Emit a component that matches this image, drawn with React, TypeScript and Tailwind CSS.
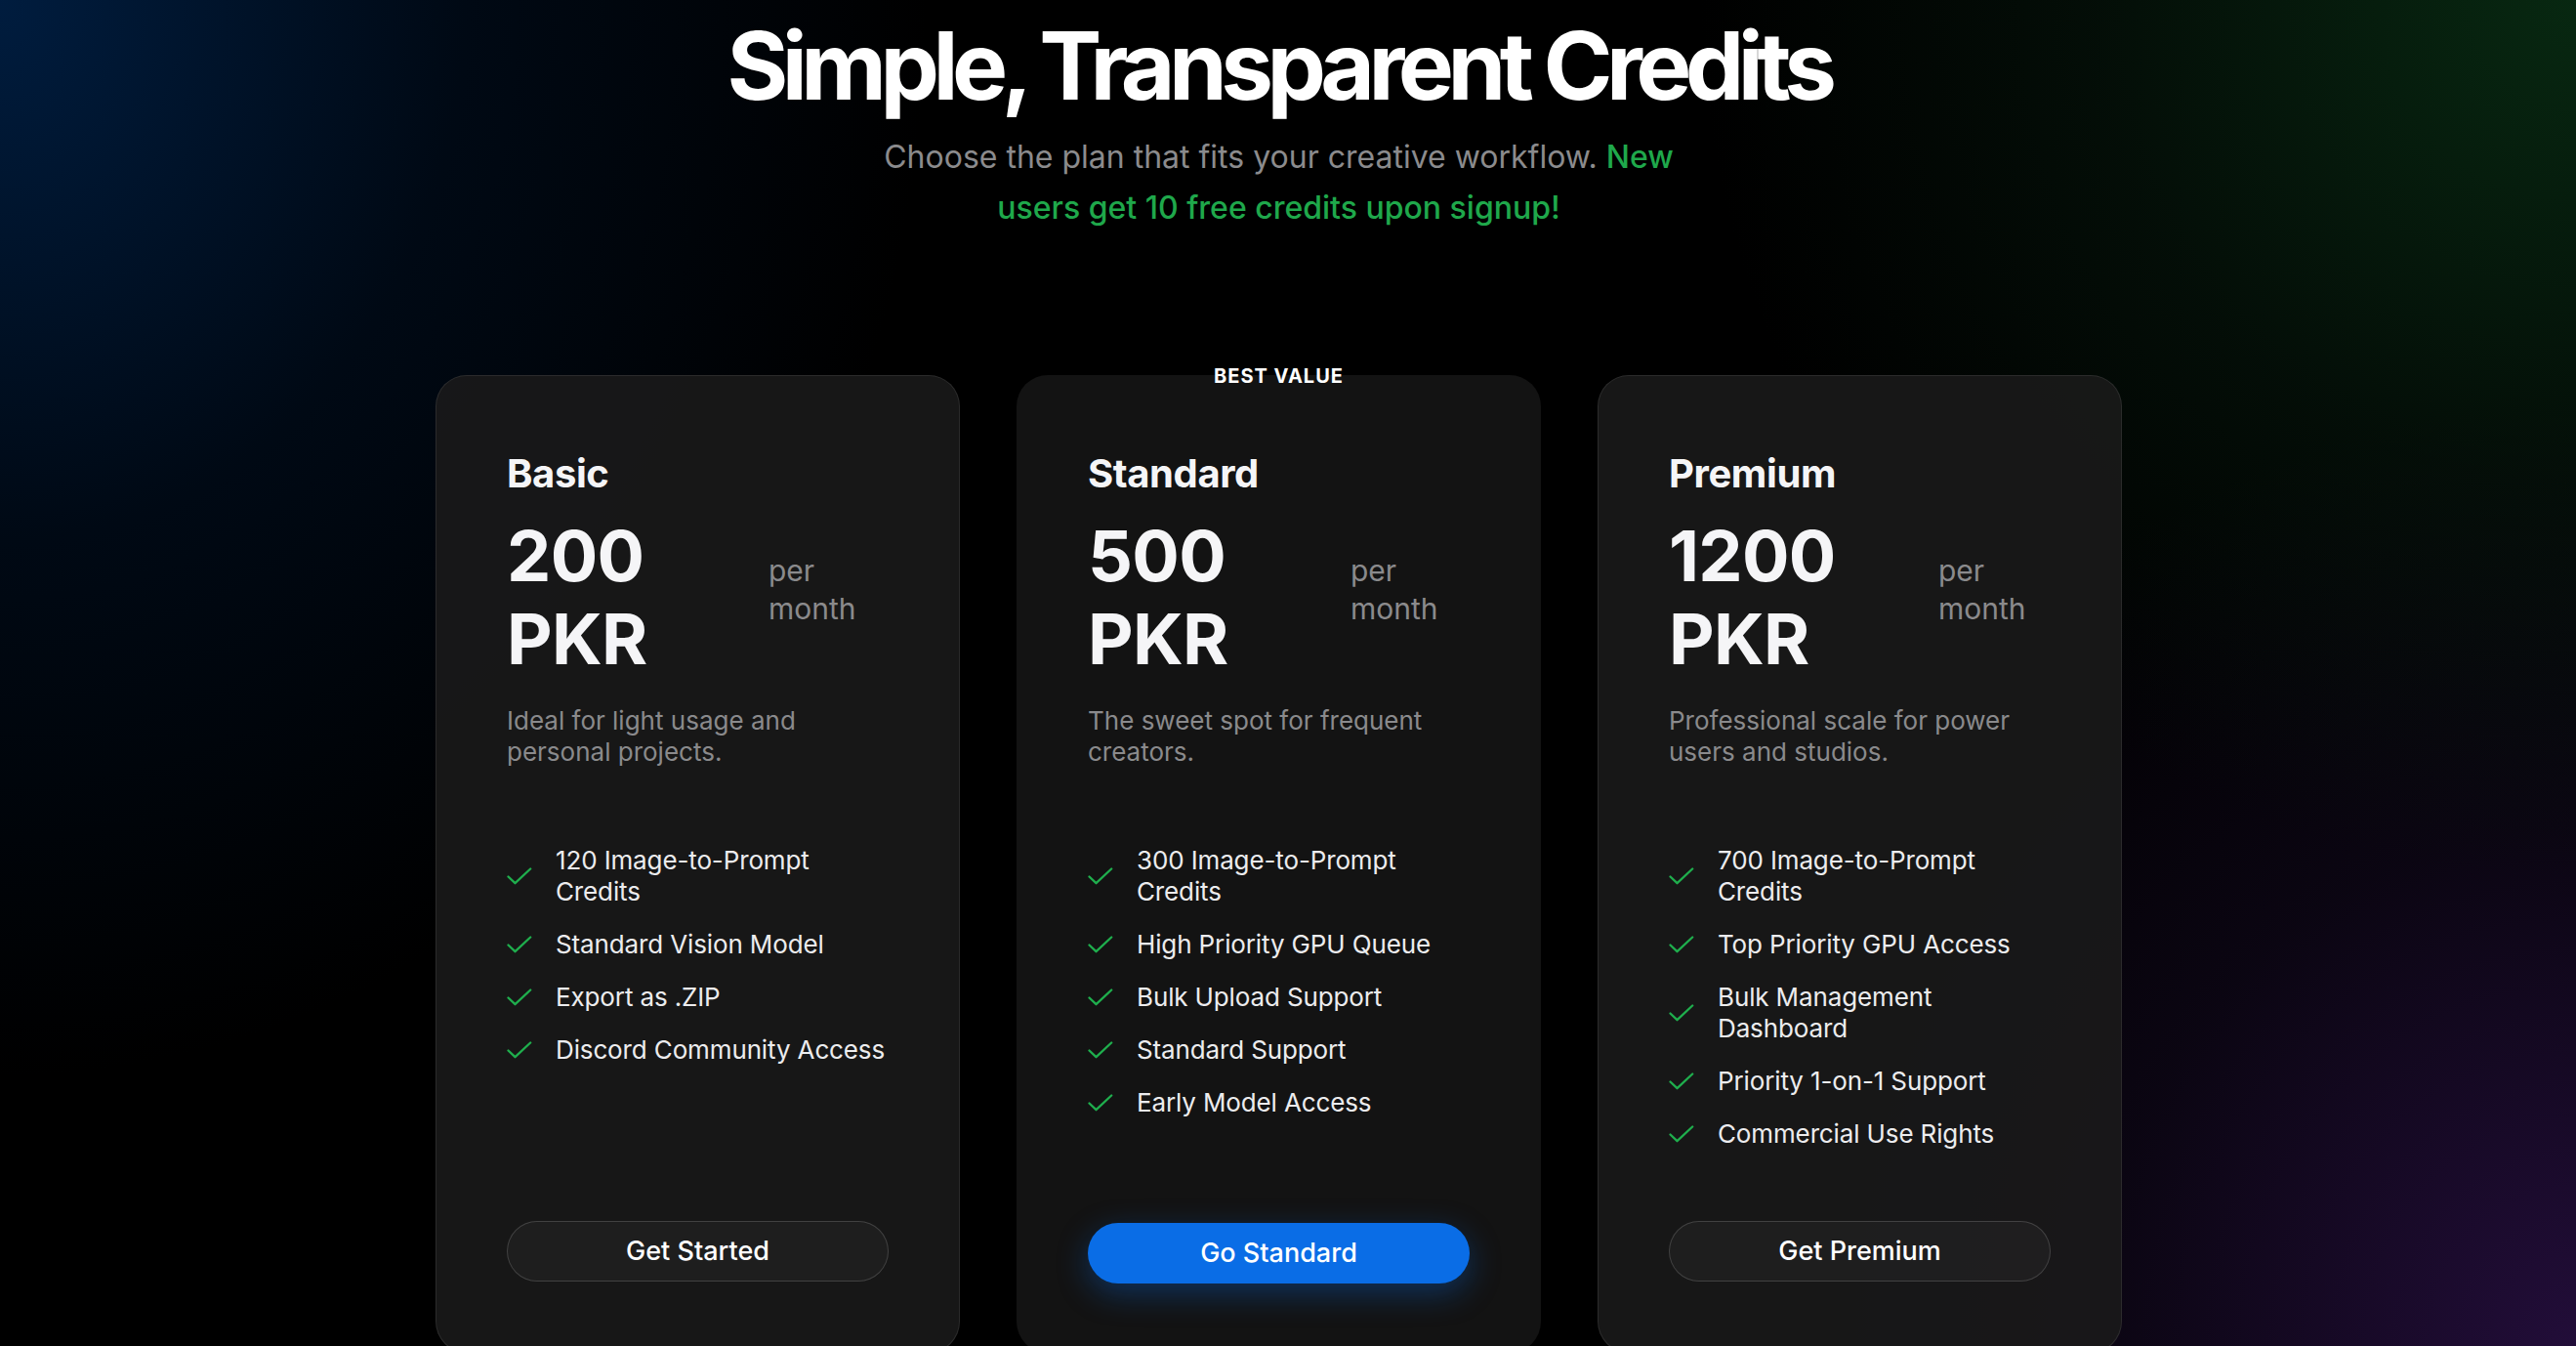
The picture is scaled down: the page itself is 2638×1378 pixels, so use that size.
import React from "react";

type Plan = {
  name: string;
  price: string;
  priceW: string;
  desc: string[];
  features: string[][];
  cta: string;
  featured: boolean;
};

const plans: Plan[] = [
  {
    name: "Basic",
    price: "200",
    priceW: "w-[252px]",
    desc: ["Ideal for light usage and", "personal projects."],
    features: [
      ["120 Image-to-Prompt", "Credits"],
      ["Standard Vision Model"],
      ["Export as .ZIP"],
      ["Discord Community Access"],
    ],
    cta: "Get Started",
    featured: false,
  },
  {
    name: "Standard",
    price: "500",
    priceW: "w-[253px]",
    desc: ["The sweet spot for frequent", "creators."],
    features: [
      ["300 Image-to-Prompt", "Credits"],
      ["High Priority GPU Queue"],
      ["Bulk Upload Support"],
      ["Standard Support"],
      ["Early Model Access"],
    ],
    cta: "Go Standard",
    featured: true,
  },
  {
    name: "Premium",
    price: "1200",
    priceW: "w-[260px]",
    desc: ["Professional scale for power", "users and studios."],
    features: [
      ["700 Image-to-Prompt", "Credits"],
      ["Top Priority GPU Access"],
      ["Bulk Management", "Dashboard"],
      ["Priority 1-on-1 Support"],
      ["Commercial Use Rights"],
    ],
    cta: "Get Premium",
    featured: false,
  },
];

function Check() {
  return (
    <svg
      width="26"
      height="18"
      viewBox="0 0 26 18"
      fill="none"
      className="shrink-0"
    >
      <path
        d="M1.5 9.5 L8.5 16.2 L24.2 1.5"
        stroke="#1fae4d"
        strokeWidth="2.3"
        strokeLinecap="round"
        strokeLinejoin="round"
      />
    </svg>
  );
}

function Card({ plan }: { plan: Plan }) {
  return (
    <div
      className={
        plan.featured
          ? "relative flex flex-col rounded-[32px] border border-transparent bg-[#131313] px-[72px] pt-[76px] pb-[70px]"
          : "relative flex flex-col rounded-[32px] border border-white/[0.09] bg-[#1a1a1a]/[0.88] px-[72px] pt-[76px] pb-[72px]"
      }
    >
      {plan.featured && (
        <div className="absolute -top-[12px] left-1/2 -translate-x-1/2 whitespace-nowrap text-[20px] leading-[24px] font-bold tracking-[0.05em] text-white">
          BEST VALUE
        </div>
      )}
      <h3 className="text-[40px] leading-[48px] font-bold tracking-[-0.01em] text-[#f5f5f7]">
        {plan.name}
      </h3>
      <div className="mt-[17px] flex items-baseline gap-4">
        <div
          className={`${plan.priceW} shrink-0 text-[72px] leading-[85px] font-bold tracking-[-0.01em] text-[#f5f5f7]`}
        >
          {plan.price}
          <br />
          PKR
        </div>
        <div className="text-[30px] leading-[39px] text-[#8a8a8c]">
          per
          <br />
          month
        </div>
      </div>
      <p className="mt-[26px] text-[26px] leading-[32px] text-[#8a8a8c]">
        {plan.desc[0]}
        <br />
        {plan.desc[1]}
      </p>
      <ul className="mt-[79px] flex flex-1 flex-col gap-[22px]">
        {plan.features.map((f, i) => (
          <li key={i} className="flex items-center gap-6">
            <Check />
            <span className="whitespace-nowrap text-[26px] leading-[32px] tracking-[-0.005em] text-[#ececee]">
              {f[0]}
              {f[1] && (
                <>
                  <br />
                  {f[1]}
                </>
              )}
            </span>
          </li>
        ))}
      </ul>
      <button
        className={
          plan.featured
            ? "mt-[73px] h-[62px] w-full rounded-full bg-[#0a6de6] text-[27px] font-medium text-white shadow-[0_10px_32px_rgba(10,109,230,0.35)]"
            : "mt-[73px] h-[62px] w-full rounded-full border border-white/[0.16] bg-white/[0.03] text-[27px] font-medium text-white"
        }
      >
        {plan.cta}
      </button>
    </div>
  );
}

export default function App() {
  return (
    <div className="h-[1378px] w-full overflow-hidden bg-black bg-[radial-gradient(ellipse_36%_80%_at_0%_0%,rgba(0,30,66,0.95),rgba(0,20,45,0.45)_50%,transparent),radial-gradient(ellipse_34%_65%_at_100%_0%,rgba(8,42,18,0.95),rgba(8,30,16,0.45)_55%,transparent),radial-gradient(ellipse_34%_70%_at_100%_100%,rgba(36,14,60,0.95),rgba(24,12,40,0.45)_55%,transparent)] font-[Inter,sans-serif]">
      <div className="flex flex-col items-center pt-[19px] pr-[19px]">
        <h1 className="text-[96px] leading-[96px] font-bold tracking-[-0.068em] text-white">
          Simple, Transparent Credits
        </h1>
        <p className="mt-[20px] w-[840px] text-center text-[32px] leading-[52px] text-[#8b8b8d]">
          Choose the plan that fits your creative workflow.{" "}
          <span className="font-medium text-[#1fa84b]">
            New users get 10 free credits upon signup!
          </span>
        </p>
        <div className="mt-[145px] grid grid-cols-[repeat(3,537px)] gap-[58px]">
          {plans.map((p) => (
            <Card key={p.name} plan={p} />
          ))}
        </div>
      </div>
    </div>
  );
}
